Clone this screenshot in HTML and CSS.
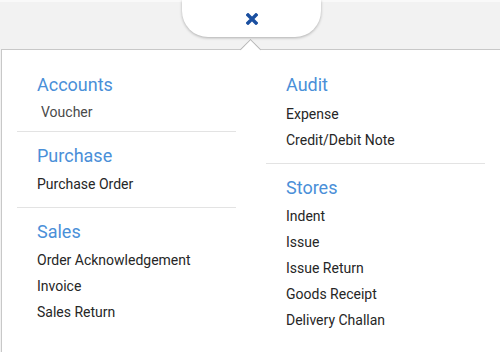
FILE: index.html
```html
<!DOCTYPE html>
<html lang="en">
<head>
    <meta charset="UTF-8">
    <title>Menu</title>
    <link rel="stylesheet" href="styles.css">
</head>
<body>
    <div class="topbar">
        <div class="close_tab">
            <svg width="12" height="12" viewBox="0 0 12 12">
                <path d="M2 2 L10 10 M10 2 L2 10" stroke="#1a4fa0" stroke-width="3.4" stroke-linecap="square"/>
            </svg>
        </div>
    </div>
    <div class="menu">
        <div class="column">
            <div class="section first">
                <h3>Accounts</h3>
                <ul>
                    <li class="sub">Voucher</li>
                </ul>
            </div>
            <div class="section">
                <h3>Purchase</h3>
                <ul>
                    <li>Purchase Order</li>
                </ul>
            </div>
            <div class="section last">
                <h3>Sales</h3>
                <ul>
                    <li>Order Acknowledgement</li>
                    <li>Invoice</li>
                    <li>Sales Return</li>
                </ul>
            </div>
        </div>
        <div class="column right">
            <div class="section first">
                <h3>Audit</h3>
                <ul>
                    <li>Expense</li>
                    <li>Credit/Debit Note</li>
                </ul>
            </div>
            <div class="section last">
                <h3>Stores</h3>
                <ul>
                    <li>Indent</li>
                    <li>Issue</li>
                    <li>Issue Return</li>
                    <li>Goods Receipt</li>
                    <li>Delivery Challan</li>
                </ul>
            </div>
        </div>
    </div>
</body>
</html>
```

FILE: styles.css
```css
*{
    padding: 0;
    margin: 0;
    list-style: none;
    box-sizing: border-box;
}
html,body{
    width: 100%;
    height: 100%;
}
body{
    background-color: #f2f2f2;
    font-family: Roboto, "Liberation Sans", sans-serif;
    overflow: hidden;
}
.topbar{
    position: relative;
    height: 49px;
    border-top: 2px solid #f9f9f9;
}
.close_tab{
    position: absolute;
    top: -2px;
    left: 182px;
    width: 139px;
    height: 37px;
    background-color: #fff;
    border-radius: 0 0 26px 26px;
    box-shadow: 0 1px 3px rgba(0,0,0,0.28);
    display: flex;
    align-items: center;
    justify-content: center;
}
.close_tab svg{
    margin-top: 1px;
    margin-left: 1px;
}
.menu{
    position: relative;
    margin-left: 1px;
    height: calc(100% - 49px);
    background-color: #fff;
    border-top: 1px solid #c8c8c8;
    border-left: 1px solid #c8c8c8;
    padding: 0 15px;
    display: grid;
    grid-template-columns: 219px 219px;
    column-gap: 30px;
    align-items: start;
}
.menu::before{
    content: "";
    position: absolute;
    top: -8px;
    left: 241px;
    width: 14px;
    height: 14px;
    background-color: #fff;
    border-top: 1px solid #b4b4b4;
    border-left: 1px solid #b4b4b4;
    transform: rotate(45deg);
}
.section{
    padding: 12px 20px 10px;
    border-bottom: 1px solid #e3e3e3;
}
.section.first{
    padding-top: 23px;
}
.section.last{
    border-bottom: none;
}
.section h3{
    font-size: 18px;
    font-weight: 400;
    line-height: 24px;
    color: #4a8fd8;
}
.section ul{
    margin-top: 3px;
}
.section li{
    font-size: 14px;
    line-height: 26px;
    color: #262626;
}
.section li.sub{
    padding-left: 4px;
    color: #4a4a4a;
}
.section.first ul{
    margin-top: 2px;
}
.right .section.first ul{
    margin-top: 4px;
}
.column:first-child .section.first{
    padding-bottom: 6px;
}
```
